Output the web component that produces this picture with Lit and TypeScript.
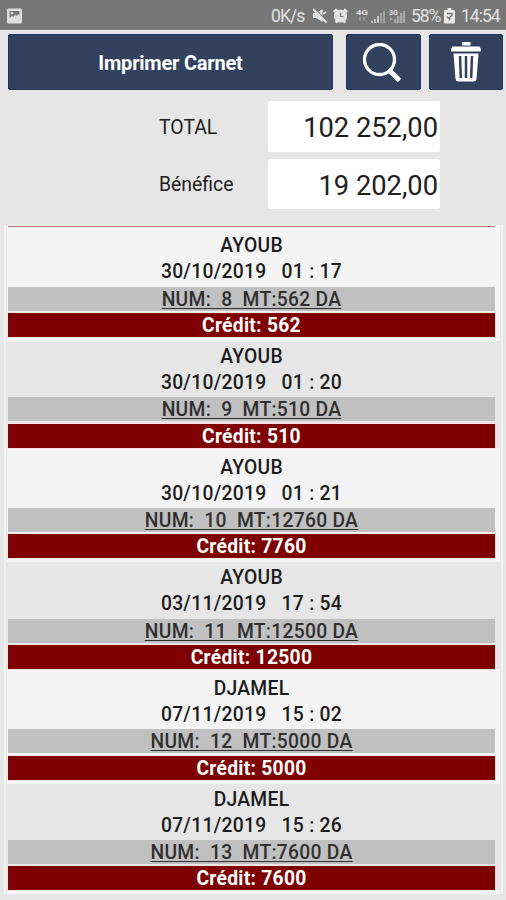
import { LitElement, html, css } from "lit";
import { customElement, property } from "lit/decorators.js";

interface Entry {
  name: string;
  date: string;
  time: string;
  num: number;
  amount: number;
  credit: number;
}

const entries: Entry[] = [
  { name: "AYOUB", date: "30/10/2019", time: "01 : 17", num: 8, amount: 562, credit: 562 },
  { name: "AYOUB", date: "30/10/2019", time: "01 : 20", num: 9, amount: 510, credit: 510 },
  { name: "AYOUB", date: "30/10/2019", time: "01 : 21", num: 10, amount: 12760, credit: 7760 },
  { name: "AYOUB", date: "03/11/2019", time: "17 : 54", num: 11, amount: 12500, credit: 12500 },
  { name: "DJAMEL", date: "07/11/2019", time: "15 : 02", num: 12, amount: 5000, credit: 5000 },
  { name: "DJAMEL", date: "07/11/2019", time: "15 : 26", num: 13, amount: 7600, credit: 7600 },
];

@customElement("status-bar")
class StatusBar extends LitElement {
  static styles = css`
    :host {
      display: flex;
      align-items: center;
      height: 30px;
      box-sizing: border-box;
      padding: 2px 7px 0 7px;
      background: #777;
      color: #e2e2e2;
      font: 400 17.5px/28px Roboto, sans-serif;
    }
    svg { display: block; flex: none; }
    .space { flex: 1; }
    .speed { width: 34px; margin-right: 8px; letter-spacing: -0.9px; }
    .alarm { margin: 0 8px 0 5px; }
    .percent { width: 29px; margin: 0 4px 0 5px; letter-spacing: -1.1px; }
    .battery { margin-right: 6px; }
    .clock { width: 38px; letter-spacing: -1px; }
    .tech { font: 700 7px Roboto, sans-serif; }
  `;
  render() {
    return html`
      <svg width="15" height="16" viewBox="0 0 15 16">
        <rect width="15" height="15" y=".5" rx="1.5" fill="#dedede" />
        <path d="M2.500 3h10v4.500l-1.500-1.500-1 2-1.500-1.500-2 2.500-1.500-1-2.500 2z" fill="#777" />
        <circle cx="5" cy="5.200" r="1.300" fill="#dedede" />
      </svg>
      <span class="space"></span>
      <span class="speed">0K/s</span>
      <svg width="15" height="16" viewBox="0 0 15 16">
        <path d="M0 5h3.500L9.500 1v13L3.500 10H0z" fill="#e2e2e2" />
        <path d="M1 0L15 14" stroke="#777" stroke-width="1.200" />
        <path d="M0 1L13.500 14.500M10 6l3-2" stroke="#e2e2e2" stroke-width="2" />
      </svg>
      <svg class="alarm" width="15" height="16" viewBox="0 0 15 16">
        <path d="M.8 4L4 1.200M14.200 4L11 1.200M2.800 14.500l2-2M12.200 14.500l-2-2" stroke="#e2e2e2" stroke-width="2.600" />
        <circle cx="7.500" cy="8" r="6.600" fill="#e2e2e2" />
        <path d="M7.500 4.800V8.500h3" fill="none" stroke="#777" stroke-width="1.200" />
      </svg>
      <svg width="50" height="16" viewBox="0 0 50 16">
        <text class="tech" x="0" y="6.500" textLength="12" lengthAdjust="spacingAndGlyphs" fill="#dcdcdc">4G</text>
        <path d="M4 9v4M8 9v4" stroke="#999" stroke-width="1.500" />
        <path d="M15 15v-2h2v2zM18 15v-4h2v4zM21 15V8h2v7z" fill="#c5c5c5" />
        <path d="M24 15V5h2v10zM27 15V3h2v12z" fill="#a3a3a3" />
        <text class="tech" x="33" y="6.500" textLength="9" lengthAdjust="spacingAndGlyphs" fill="#dcdcdc">3G</text>
        <path d="M34 9l3 2-3 2M38 15v-4h2.300v4zM41 15V8h2.300v7zM44 15V5h2.300v10zM47 15V3h2v12z" fill="#aaa" />
      </svg>
      <span class="percent">58%</span>
      <svg class="battery" width="11" height="16" viewBox="0 0 11 16">
        <path d="M3.500 0h4v2H10a1 1 0 0 1 1 1v11.500a1 1 0 0 1-1 1H1a1 1 0 0 1-1-1V3a1 1 0 0 1 1-1h2.500z" fill="#e8e8e8" />
        <path d="M3 5.500h5v2L5.500 9.500v3M2.800 8.500L5 10.500" fill="none" stroke="#777" stroke-width="1.400" />
      </svg>
      <span class="clock">14:54</span>
    `;
  }
}

@customElement("total-field")
class TotalField extends LitElement {
  @property() label = "";
  @property() value = "";
  static styles = css`
    :host {
      display: grid;
      grid-template-columns: 109px 172px;
      align-items: center;
      height: 50.5px;
      color: #202020;
      font: 400 19.4px/50px Roboto, sans-serif;
    }
    .value {
      box-sizing: border-box;
      padding: 2px 2px 0 0;
      height: 50.5px;
      border-radius: 2px;
      background: #fff;
      text-align: right;
      font-size: 27.3px;
    }
    .label { padding-top: 3px; }
  `;
  render() {
    return html`<span class="label">${this.label}</span><span class="value">${this.value}</span>`;
  }
}

@customElement("entry-row")
class EntryRow extends LitElement {
  @property({ attribute: false }) entry!: Entry;
  static styles = css`
    :host {
      display: flex;
      flex-direction: column;
      box-sizing: border-box;
      height: 110.67px;
      padding: 2.8px 5px 0 1px;
      text-align: center;
      color: #1c1c1c;
      font: 500 19.3px/26px Roboto, sans-serif;
      letter-spacing: 0.28px;
      border-bottom: 4px solid #f6f5f5;
    }
    .name, .date, .order, .credit { white-space: pre; }
    .name { height: 26px; }
    .date { height: 27.3px; }
    .order {
      height: 24px;
      line-height: 25px;
      margin-bottom: 2.5px;
      background: #c0c0c0;
      color: #303030;
      text-decoration: underline;
      text-decoration-thickness: 1px;
      text-underline-offset: 2px;
    }
    .credit {
      height: 24px;
      line-height: 25px;
      background: #7e0000;
      color: #fff;
      font-weight: 700;
      box-shadow: 0 0 0 1px #f1e6e5;
    }
  `;
  render() {
    const e = this.entry;
    return html`
      <div class="name">${e.name}</div>
      <div class="date">${`${e.date}   ${e.time}`}</div>
      <div class="order">${`NUM:  ${e.num}  MT:${e.amount} DA`}</div>
      <div class="credit">Crédit: ${e.credit}</div>
    `;
  }
}

@customElement("app-root")
class AppRoot extends LitElement {
  static styles = css`
    :host {
      display: flex;
      flex-direction: column;
      width: 506px;
      height: 900px;
      overflow: hidden;
      background: #e6e6e6;
      font-family: Roboto, sans-serif;
    }
    .toolbar {
      display: flex;
      padding: 3px 3px 0 8px;
      border-top: 1px solid #f2f2f2;
    }
    .button {
      display: flex;
      align-items: center;
      justify-content: center;
      box-sizing: border-box;
      width: 74.5px;
      height: 56px;
      border: 1px solid #1f345a;
      border-radius: 2px;
      background: #32415e;
      color: #fff;
      font: 700 20px/56px Roboto, sans-serif;
      letter-spacing: -0.2px;
    }
    .print { width: 325px; margin-right: 13px; padding-top: 1px; }
    .search { margin-right: 8px; padding: 2px 2px 0 0; }
    .totals {
      display: flex;
      flex-direction: column;
      gap: 7.1px;
      padding: 10.6px 0 15.8px 159px;
      margin-top: -0.8px;
    }
    .list {
      margin: 0.9px 3px 0 4px;
      padding: 0 1px 0 1px;
      border: 2px solid #f1f1f1;
      border-top-width: 1px;
      border-bottom: none;
    }
    .top { height: 4.9px; background: #f4f4f4; }
    .rule { height: 1px; margin: 0 5px 0 1px; background: #ab7479; }
    .odd { background: #f4f4f4; }
  `;
  render() {
    return html`
      <status-bar></status-bar>
      <div class="toolbar">
        <div class="button print">Imprimer Carnet</div>
        <div class="button search">
          <svg width="40" height="40" viewBox="0 0 40 40">
            <circle cx="17.500" cy="16.500" r="15" fill="none" stroke="#fff" stroke-width="3.300" />
            <path d="M27 27L37.500 37.500" stroke="#fff" stroke-width="5" />
          </svg>
        </div>
        <div class="button">
          <svg width="32" height="42" viewBox="0 0 32 42">
            <path d="M12 1h8.500v3.500H12zM2.500 5.500h27l1.500 2.500v2.500H1V8z" fill="#fff" />
            <path d="M3.500 12.500h25L26.500 38a3 3 0 0 1-3 2.500H8.500a3 3 0 0 1-3-2.500z" fill="#fff" />
            <path d="M10 15l.8 22M16 15v22M22 15l-.8 22" stroke="#32415e" stroke-width="2.500" />
          </svg>
        </div>
      </div>
      <div class="totals">
        <total-field label="TOTAL" value="102 252,00"></total-field>
        <total-field label="Bénéfice" value="19 202,00"></total-field>
      </div>
      <div class="list">
        <div class="top"><div class="rule"></div></div>
        ${entries.map((e, i) => html`<entry-row class=${i % 2 ? "even" : "odd"} .entry=${e}></entry-row>`)}
      </div>
    `;
  }
}
